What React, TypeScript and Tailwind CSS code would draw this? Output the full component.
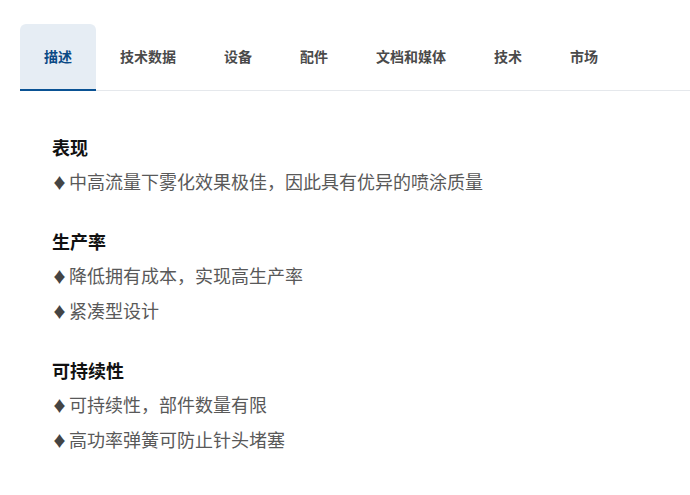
import React, { useState } from 'react';

const tabs = ['描述', '技术数据', '设备', '配件', '文档和媒体', '技术', '市场'];

const sections = [
  {
    title: '表现',
    items: ['中高流量下雾化效果极佳，因此具有优异的喷涂质量'],
  },
  {
    title: '生产率',
    items: ['降低拥有成本，实现高生产率', '紧凑型设计'],
  },
  {
    title: '可持续性',
    items: ['可持续性，部件数量有限', '高功率弹簧可防止针头堵塞'],
  },
];

const App = () => {
  const [active, setActive] = useState(0);

  return (
    <div
      className="min-h-screen bg-white pt-6 pl-5"
      style={{ fontFamily: '"Noto Sans", "Noto Sans CJK SC", sans-serif' }}
    >
      <div className="flex border-b border-[#e5e8ec]">
        {tabs.map((tab, i) => (
          <button
            key={tab}
            onClick={() => setActive(i)}
            className={
              i === active
                ? 'h-[67px] -mb-px px-6 rounded-t-md bg-[#e6edf4] border-b-2 border-[#0a5294] text-[14px] font-semibold text-[#0b4a85]'
                : 'h-[67px] -mb-px px-6 border-b-2 border-transparent text-[14px] font-semibold text-[#4a4a4a]'
            }
          >
            {tab}
          </button>
        ))}
      </div>

      <div className="pt-[40px] pl-8 flex flex-col gap-[25px]">
        {sections.map((s) => (
          <div key={s.title}>
            <h3 className="text-[18px] leading-[34px] font-bold text-[#111]">{s.title}</h3>
            {s.items.map((item) => (
              <p key={item} className="text-[18px] leading-[34px] text-[#595959]">
                <span className="text-[15px] text-[#444] mr-[2px]">♦</span>
                {item}
              </p>
            ))}
          </div>
        ))}
      </div>
    </div>
  );
};

export default App;
